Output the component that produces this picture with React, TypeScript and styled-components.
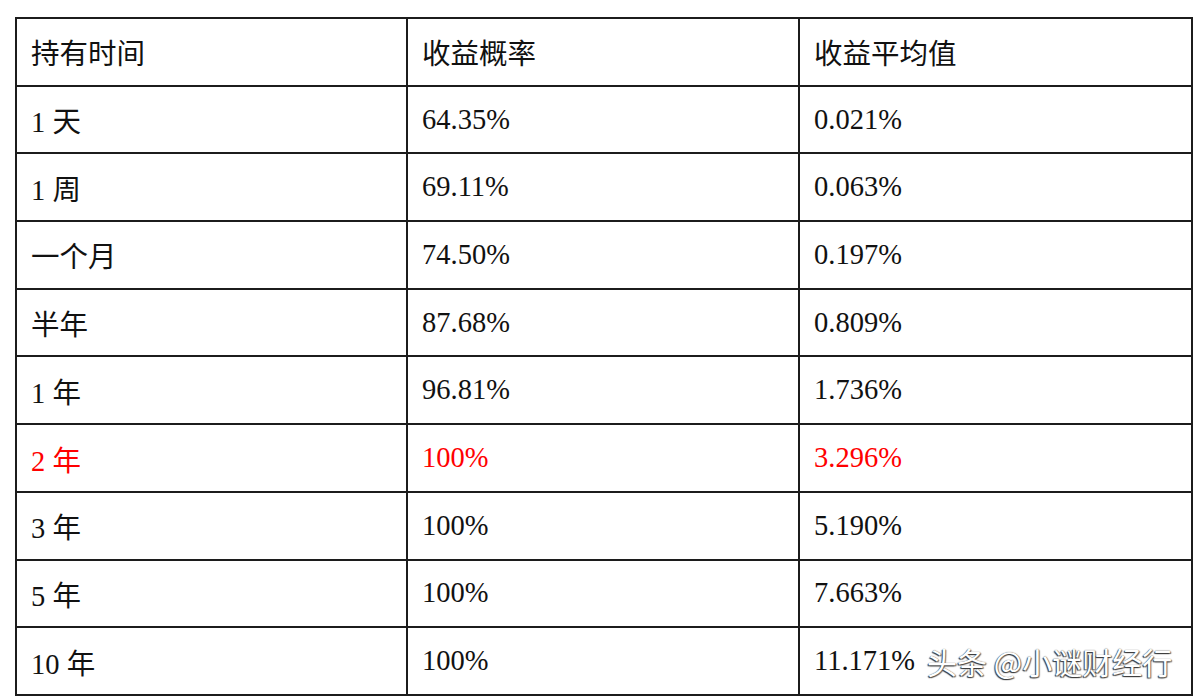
import React from "react";
import styled, { createGlobalStyle } from "styled-components";

const GlobalStyle = createGlobalStyle`
  html, body {
    margin: 0;
    padding: 0;
    background: #ffffff;
  }
  body {
    font-family: "Liberation Serif", "Noto Sans CJK SC", serif;
  }
`;

const Page = styled.div`
  width: 1200px;
  height: 700px;
  padding: 17px 0 0 15px;
  box-sizing: border-box;
  background: #ffffff;
`;

const Table = styled.div`
  display: grid;
  grid-template-columns: 391px 392px 393px;
  grid-template-rows: repeat(10, 1fr);
  width: 1178px;
  height: 679px;
  box-sizing: border-box;
  border-left: 2px solid #1c1c1c;
  border-top: 2px solid #1c1c1c;
`;

const Cell = styled.div<{ $red?: boolean }>`
  display: flex;
  align-items: center;
  padding-left: 14px;
  box-sizing: border-box;
  border-right: 2px solid #1c1c1c;
  border-bottom: 2px solid #1c1c1c;
  font-size: 28.5px;
  color: ${(p) => (p.$red ? "#ff0000" : "#111111")};
  white-space: nowrap;
`;

const Watermark = styled.span`
  margin-left: 12px;
  font-family: "Noto Sans CJK SC", sans-serif;
  font-size: 30px;
  color: #ffffff;
  text-shadow: -1px 1px 1px #3a3a3a, 1px 1px 1px #6a6a6a, 0 0 1px #444;
`;

const rows: [string, string, string, boolean?][] = [
  ["持有时间", "收益概率", "收益平均值"],
  ["1 天", "64.35%", "0.021%"],
  ["1 周", "69.11%", "0.063%"],
  ["一个月", "74.50%", "0.197%"],
  ["半年", "87.68%", "0.809%"],
  ["1 年", "96.81%", "1.736%"],
  ["2 年", "100%", "3.296%", true],
  ["3 年", "100%", "5.190%"],
  ["5 年", "100%", "7.663%"],
  ["10 年", "100%", "11.171%"],
];

export default function App() {
  return (
    <>
      <GlobalStyle />
      <Page>
        <Table>
          {rows.map(([a, b, c, red], i) => (
            <React.Fragment key={i}>
              <Cell $red={red}>{a}</Cell>
              <Cell $red={red}>{b}</Cell>
              <Cell $red={red}>
                {c}
                {i === rows.length - 1 && <Watermark>头条 @小谜财经行</Watermark>}
              </Cell>
            </React.Fragment>
          ))}
        </Table>
      </Page>
    </>
  );
}
